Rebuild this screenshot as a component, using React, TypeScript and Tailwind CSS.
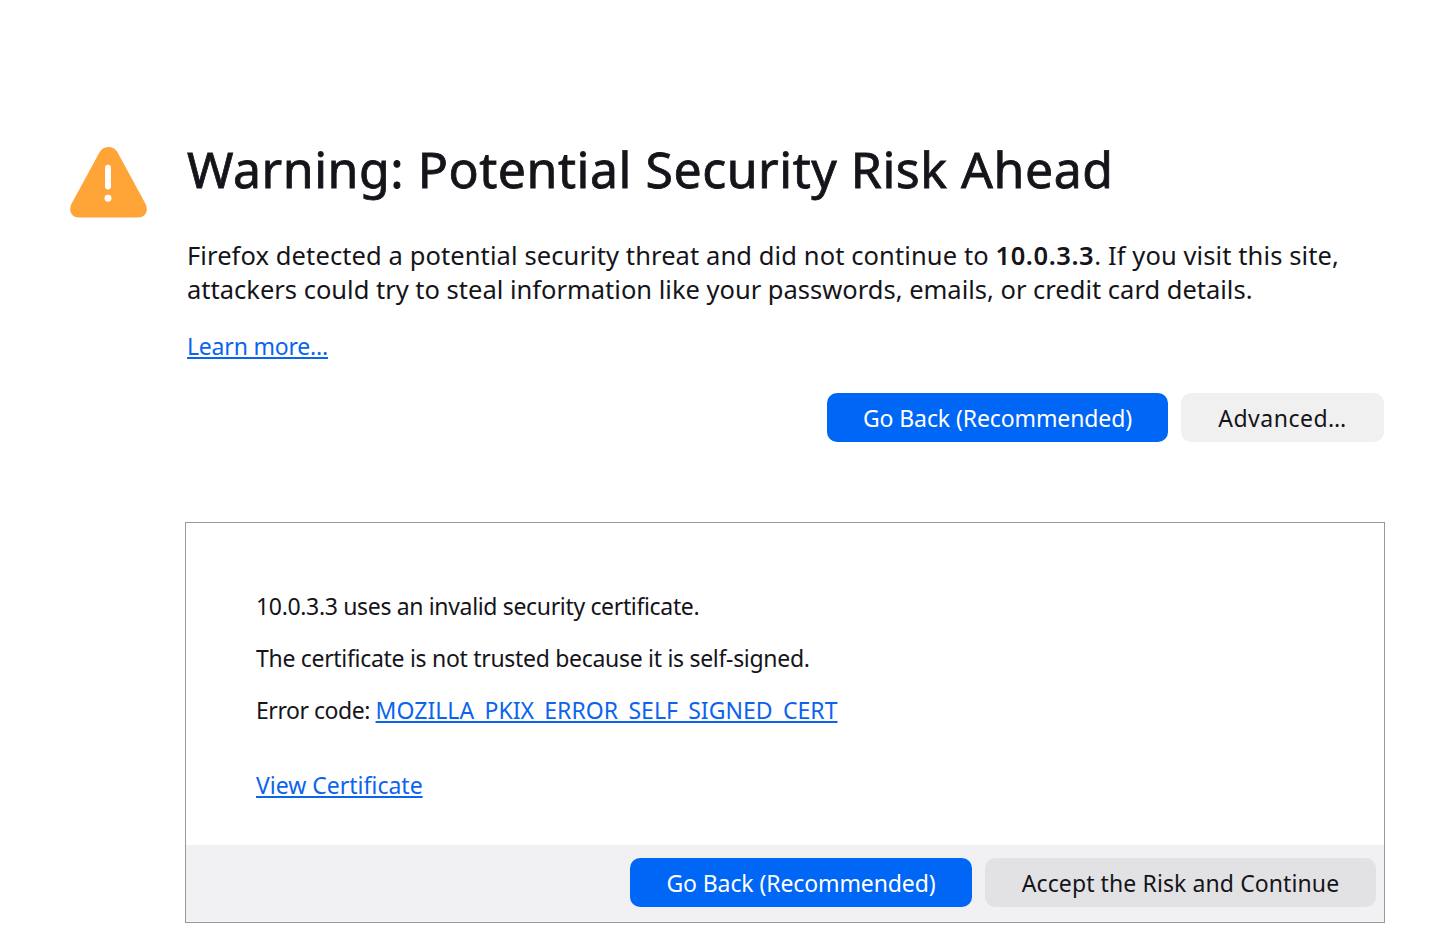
function WarningIcon() {
    return (
        <svg width="77" height="71" viewBox="0 0 78 72" className="block">
            <path d="M39 0c4.500 0 7.500 2.200 9.500 6l28 51.500c3.500 6.800 0 14-7 14H8.500c-7 0-10.500-7.200-7-14l28-51.500c2-3.800 5-6 9.500-6z" fill="#ffa436" />
            <rect x="35.500" y="18" width="6" height="25" rx="3" fill="#fff" />
            <circle cx="38.500" cy="52" r="3.500" fill="#fff" />
        </svg>
    )
}

function App() {
    return (
        <div className="w-[1456px] h-[950px] bg-white overflow-hidden text-[#15141a] font-['Noto_Sans',sans-serif]">
            <div className="flex pt-[147px] pl-[70px]">
                <div className="w-[117px] shrink-0">
                    <WarningIcon />
                </div>
                <div className="w-[1199px]">
                    <h1 className="text-[50px] leading-[48px] -mt-[2px] font-normal tracking-[0.52px] [-webkit-text-stroke:0.8px_#15141a]">
                        Warning: Potential Security Risk Ahead
                    </h1>
                    <p className="mt-[45px] text-[25.500px] leading-[34px] whitespace-nowrap">
                        <span className="tracking-[0.1px]">
                            Firefox detected a potential security threat and did not continue to <span className="font-semibold tracking-[0.6px]">10.0.3.3</span>. If you visit this site,
                        </span>
                        <br />
                        attackers could try to steal information like your passwords, emails, or credit card details.
                    </p>
                    <a href="#" className="block mt-[23px] w-fit text-[23px] leading-[34px] tracking-[-0.2px] text-[#0a64ee] underline">
                        Learn more…
                    </a>
                    <div className="flex justify-end gap-[13px] mt-[30px] mr-[2px]">
                        <button className="w-[341px] h-[49px] rounded-[10px] bg-[#0066f5] text-white text-[23px] tracking-[-0.1px] pt-[1px]">
                            Go Back (Recommended)
                        </button>
                        <button className="w-[203px] h-[49px] rounded-[10px] bg-[#f0f0f0] text-[23px] tracking-[0.5px] pt-[1px]">
                            Advanced…
                        </button>
                    </div>
                    <div className="mt-[80px] -ml-[2px] w-[1200px] h-[401px] border border-[#9a9a9e] flex flex-col">
                        <div className="flex-1 pl-[70px] pt-[66px] text-[23px] leading-[34px]">
                            <p className="tracking-[-0.34px]">10.0.3.3 uses an invalid security certificate.</p>
                            <p className="mt-[18px] tracking-[-0.3px]">The certificate is not trusted because it is self-signed.</p>
                            <p className="mt-[18px] tracking-[-0.45px]">
                                Error code: <a href="#" className="text-[#0a64ee] underline tracking-[0.04px]">MOZILLA_PKIX_ERROR_SELF_SIGNED_CERT</a>
                            </p>
                            <a href="#" className="block mt-[41px] w-fit text-[#0a64ee] underline">View Certificate</a>
                        </div>
                        <div className="h-[77px] bg-[#f1f1f4] flex justify-end items-start gap-[13px] pt-[13px] pr-[8px]">
                            <button className="w-[342px] h-[49px] rounded-[10px] bg-[#0066f5] text-white text-[23px] tracking-[-0.1px] pt-[1px]">
                                Go Back (Recommended)
                            </button>
                            <button className="w-[391px] h-[49px] rounded-[10px] bg-[#e2e2e4] text-[23px] tracking-[0.1px] pt-[1px]">
                                Accept the Risk and Continue
                            </button>
                        </div>
                    </div>
                </div>
            </div>
        </div>
    )
}

export default App
